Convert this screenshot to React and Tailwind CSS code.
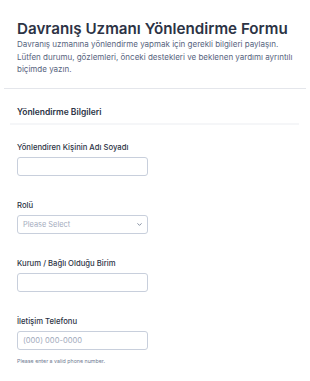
import { ChevronDown } from 'lucide-react';

const FIELDS = [
  { label: 'Yönlendiren Kişinin Adı Soyadı', type: 'text' },
  { label: 'Rolü', type: 'select', placeholder: 'Please Select' },
  { label: 'Kurum / Bağlı Olduğu Birim', type: 'text' },
  { label: 'İletişim Telefonu', type: 'phone', placeholder: '(000) 000-0000', hint: 'Please enter a valid phone number.' },
];

function Field({ field }) {
  return (
    <div className="pt-[24px] first:pt-[17px]">
      <label className="block text-[7.7px] leading-[11px] font-medium text-[#2c3345]">{field.label}</label>
      {field.type === 'select' ? (
        <div className="mt-[4px] w-[131px] h-[19px] border border-[#c8cfdc] rounded-[3px] flex items-center justify-between pl-[5px] pr-[4px]">
          <span className="text-[7.4px] text-[#a3abbd]">{field.placeholder}</span>
          <ChevronDown size={7} strokeWidth={2.5} className="text-[#57647e]" />
        </div>
      ) : (
        <div className="mt-[4px] w-[131px] h-[19px] border border-[#c8cfdc] rounded-[3px] flex items-center pl-[5px]">
          {field.placeholder && <span className="text-[7.6px] text-[#a3abbd]">{field.placeholder}</span>}
        </div>
      )}
      {field.hint && <p className="mt-[8px] text-[5.3px] leading-[7px] text-[#6f7a91]">{field.hint}</p>}
    </div>
  );
}

export default function App() {
  return (
    <div className="w-[310px] h-[381px] bg-white overflow-hidden" style={{ fontFamily: 'Inter, "Noto Sans", sans-serif' }}>
      {/* Header */}
      <div className="mx-[4px] pt-[20px] pb-[12px] px-[13px] border-b border-[#e4e6eb]">
        <h1 className="text-[15.2px] leading-[18px] font-semibold text-[#2c3345] whitespace-nowrap">Davranış Uzmanı Yönlendirme Formu</h1>
        <p className="text-[8px] leading-[12.7px] text-[#57647e]">
          Davranış uzmanına yönlendirme yapmak için gerekli bilgileri paylaşın. Lütfen durumu, gözlemleri, önceki destekleri ve beklenen yardımı ayrıntılı biçimde yazın.
        </p>
      </div>

      {/* Section */}
      <div className="mx-[10px] pt-[17px] pb-[5px] px-[7px] border-b-2 border-[#f5f6f8] w-[289px]">
        <h2 className="text-[8.5px] leading-[12px] font-semibold text-[#2c3345]">Yönlendirme Bilgileri</h2>
      </div>

      <div className="px-[17px]">
        {FIELDS.map(f => <Field key={f.label} field={f} />)}
      </div>
    </div>
  );
}
